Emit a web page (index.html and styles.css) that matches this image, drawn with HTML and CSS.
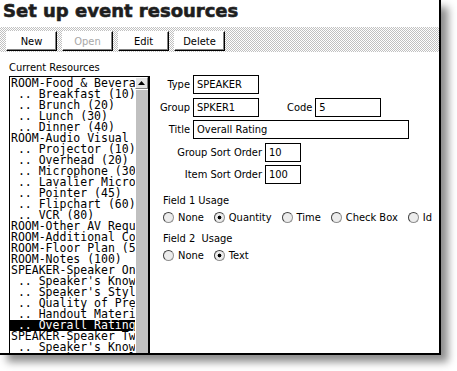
FILE: index.html
```html
<!DOCTYPE html>
<html>
<head>
<meta charset="utf-8">
<title>Set up event resources</title>
<link rel="stylesheet" href="styles.css">
</head>
<body>
<div class="frame">
  <h1 class="title">Set up event resources</h1>
  <div class="toolbar">
    <div class="btn">New</div>
    <div class="btn disabled">Open</div>
    <div class="btn">Edit</div>
    <div class="btn">Delete</div>
  </div>
  <div class="main">
    <div class="left">
      <div class="label">Current Resources</div>
      <div class="listbox">
        <div class="items">
          <div class="item">ROOM-Food &amp; Beverage</div>
          <div class="item"> .. Breakfast (10)</div>
          <div class="item"> .. Brunch (20)</div>
          <div class="item"> .. Lunch (30)</div>
          <div class="item"> .. Dinner (40)</div>
          <div class="item">ROOM-Audio Visual Equipment</div>
          <div class="item"> .. Projector (10)</div>
          <div class="item"> .. Overhead (20)</div>
          <div class="item"> .. Microphone (30)</div>
          <div class="item"> .. Lavalier Microphone (35)</div>
          <div class="item"> .. Pointer (45)</div>
          <div class="item"> .. Flipchart (60)</div>
          <div class="item"> .. VCR (80)</div>
          <div class="item">ROOM-Other AV Requirements</div>
          <div class="item">ROOM-Additional Comments</div>
          <div class="item">ROOM-Floor Plan (50)</div>
          <div class="item">ROOM-Notes (100)</div>
          <div class="item">SPEAKER-Speaker One</div>
          <div class="item"> .. Speaker's Knowledge</div>
          <div class="item"> .. Speaker's Style</div>
          <div class="item"> .. Quality of Presentation</div>
          <div class="item"> .. Handout Materials</div>
          <div class="item sel"> .. Overall Rating</div>
          <div class="item">SPEAKER-Speaker Two</div>
          <div class="item"> .. Speaker's Knowledge</div>
          <div class="item"> .. Speaker's Style</div>
        </div>
        <div class="scrollbar">
          <div class="arrow"><svg width="7" height="4" viewBox="0 0 7 4"><path d="M3.5 0 L7 4 L0 4 Z" fill="#000"/></svg></div>
          <div class="thumb"></div>
        </div>
      </div>
    </div>
    <div class="form">
      <div class="row">
        <span class="lab">Type</span>
        <span class="field w66">SPEAKER</span>
      </div>
      <div class="row">
        <span class="lab">Group</span>
        <span class="field w66">SPKER1</span>
        <span class="code-lab">Code</span>
        <span class="field w66">5</span>
      </div>
      <div class="row">
        <span class="lab">Title</span>
        <span class="field w216">Overall Rating</span>
      </div>
      <div class="row">
        <span class="lab wide">Group Sort Order</span>
        <span class="field w36">10</span>
      </div>
      <div class="row">
        <span class="lab wide">Item Sort Order</span>
        <span class="field w36">100</span>
      </div>
      <div class="flabel first">Field 1 Usage</div>
      <div class="radios">
        <span class="radio"><span class="dot"></span>None</span>
        <span class="radio"><span class="dot on"></span>Quantity</span>
        <span class="radio"><span class="dot"></span>Time</span>
        <span class="radio"><span class="dot"></span>Check Box</span>
        <span class="radio"><span class="dot"></span>Id</span>
      </div>
      <div class="flabel">Field 2&nbsp; Usage</div>
      <div class="radios">
        <span class="radio"><span class="dot"></span>None</span>
        <span class="radio"><span class="dot on"></span>Text</span>
      </div>
    </div>
  </div>
</div>
</body>
</html>
```
FILE: styles.css
```css
html, body {
  margin: 0;
  padding: 0;
  background: #fff;
}
body {
  width: 457px;
  height: 371px;
  overflow: hidden;
  font-family: "DejaVu Sans Condensed", "DejaVu Sans", sans-serif;
  font-stretch: condensed;
  font-size: 11px;
  color: #000;
}
.frame {
  width: 439px;
  height: 353px;
  border-right: 2px solid #000;
  border-bottom: 2px solid #000;
  box-shadow: 7px 7px 8px rgba(0, 0, 0, 0.45);
  background: #fff;
  overflow: hidden;
  display: flex;
  flex-direction: column;
}
.title {
  margin: 0;
  height: 27px;
  box-sizing: border-box;
  padding: 0 0 0 3px;
  font-family: "DejaVu Sans", sans-serif;
  font-stretch: normal;
  font-weight: bold;
  font-size: 18px;
  line-height: 21px;
  color: #1e1e1e;
  white-space: nowrap;
  -webkit-text-stroke: 0.6px #1e1e1e;
}
.toolbar {
  height: 25px;
  box-sizing: border-box;
  padding: 4px 0 1px 6px;
  display: flex;
  gap: 5px;
  background: repeating-conic-gradient(#c0c0c0 0 25%, #fff 0 50%) 0 0 / 2px 2px;
}
.btn {
  width: 51px;
  height: 20px;
  box-sizing: border-box;
  background: #fff;
  border: 1px solid;
  border-color: #fff #000 #000 #fff;
  box-shadow: inset -1px -1px #808080;
  display: flex;
  align-items: center;
  justify-content: center;
}
.btn.disabled {
  color: #a8a8a8;
}
.main {
  flex: 1;
  display: flex;
  min-height: 0;
}
.left {
  width: 150px;
  flex: none;
  box-sizing: border-box;
  padding: 9px 0 0 9px;
  display: flex;
  flex-direction: column;
}
.label {
  height: 13px;
  line-height: 13px;
  margin-bottom: 2px;
}
.listbox {
  flex: 1;
  min-height: 0;
  border: 1px solid #000;
  border-right-width: 2px;
  border-bottom: none;
  display: flex;
  overflow: hidden;
}
.items {
  flex: 1;
  min-width: 0;
  padding-top: 1px;
  font-family: "DejaVu Sans Mono", monospace;
  font-stretch: normal;
  font-size: 11.5px;
  line-height: 11px;
  overflow: hidden;
}
.item {
  height: 11px;
  padding-left: 1px;
  white-space: pre;
}
.item.sel {
  background: #000;
  color: #fff;
}
.scrollbar {
  width: 13px;
  flex: none;
  background: #c0c0c0;
  display: flex;
  flex-direction: column;
}
.arrow {
  height: 12px;
  box-sizing: border-box;
  background: #e4e4e4;
  border-top: 1px solid #fff;
  border-left: 1px solid #fff;
  border-bottom: 1px solid #808080;
  border-right: 1px solid #808080;
  display: flex;
  align-items: center;
  justify-content: center;
}
.thumb {
  flex: 1;
  border-top: 1px solid #fff;
  border-left: 1px solid #fff;
}
.form {
  flex: 1;
  padding-top: 23px;
  display: flex;
  flex-direction: column;
}
.row {
  display: flex;
  align-items: center;
  height: 19px;
  margin-bottom: 3.5px;
  white-space: nowrap;
}
.lab {
  width: 40px;
  flex: none;
  text-align: right;
  margin-right: 3px;
}
.lab.wide {
  width: 112px;
}
.code-lab {
  margin-left: 28px;
  margin-right: 3px;
}
.field {
  height: 19px;
  box-sizing: border-box;
  border: 1px solid #000;
  padding-left: 3px;
  line-height: 17px;
  flex: none;
}
.w66 { width: 66px; }
.w216 { width: 216px; }
.w36 { width: 36px; }
.flabel {
  margin: 8px 0 0 13px;
  line-height: 13px;
  height: 13px;
}
.flabel.first {
  margin-top: 6px;
}
.radios {
  display: flex;
  align-items: center;
  height: 13px;
  margin: 4px 0 0 13px;
  gap: 10px;
  white-space: nowrap;
}
.radio {
  display: flex;
  align-items: center;
  gap: 4px;
}
.dot {
  width: 11px;
  height: 11px;
  box-sizing: border-box;
  border-radius: 50%;
  border: 1px solid #404040;
  border-right-color: #909090;
  border-bottom-color: #909090;
  background: #ececec;
}
.dot.on {
  background: radial-gradient(circle, #000 0 1.6px, #ececec 2.2px);
}
```
